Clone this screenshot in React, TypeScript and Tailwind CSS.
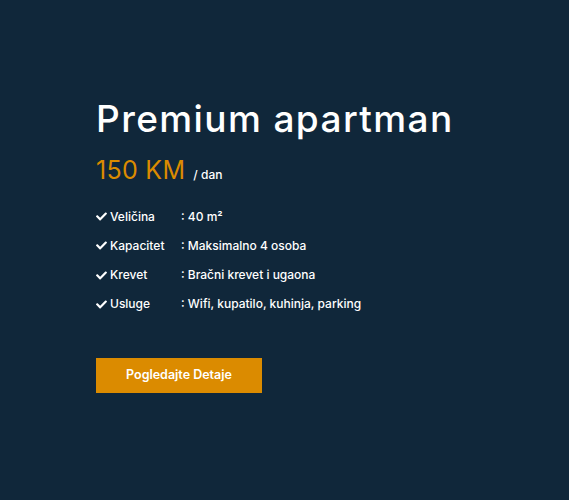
import { FaCheck } from "react-icons/fa";

const details = [
  { label: "Veličina", value: ": 40 m²" },
  { label: "Kapacitet", value: ": Maksimalno 4 osoba" },
  { label: "Krevet", value: ": Bračni krevet i ugaona" },
  { label: "Usluge", value: ": Wifi, kupatilo, kuhinja, parking" },
];

const App = () => {
  return (
    <div className="w-[569px] h-[500px] bg-[#10273a] text-white font-['Inter',sans-serif] pl-[96px] pt-[97px]">
      <h1 className="text-[37px] leading-[43px] font-medium tracking-[1.4px]">Premium apartman</h1>
      <div className="mt-[15px] h-[30px] flex items-baseline">
        <span className="text-[25px] leading-[30px] font-normal tracking-[0.3px] text-[#db8b00]">150 KM</span>
        <span className="ml-[8px] text-[12px] font-medium">/ dan</span>
      </div>
      <ul className="mt-[22px] flex flex-col gap-[10.3px]">
        {details.map((d) => (
          <li key={d.label} className="flex items-center h-[19px] text-[12px] font-medium">
            <FaCheck className="w-[11px] h-[11px] mr-[3px]" />
            <span className="w-[71px]">{d.label}</span>
            <span>{d.value}</span>
          </li>
        ))}
      </ul>
      <button className="mt-[44px] w-[166px] h-[35px] bg-[#db8b00] text-[12.5px] font-semibold text-white">
        Pogledajte Detaje
      </button>
    </div>
  );
};

export default App;
